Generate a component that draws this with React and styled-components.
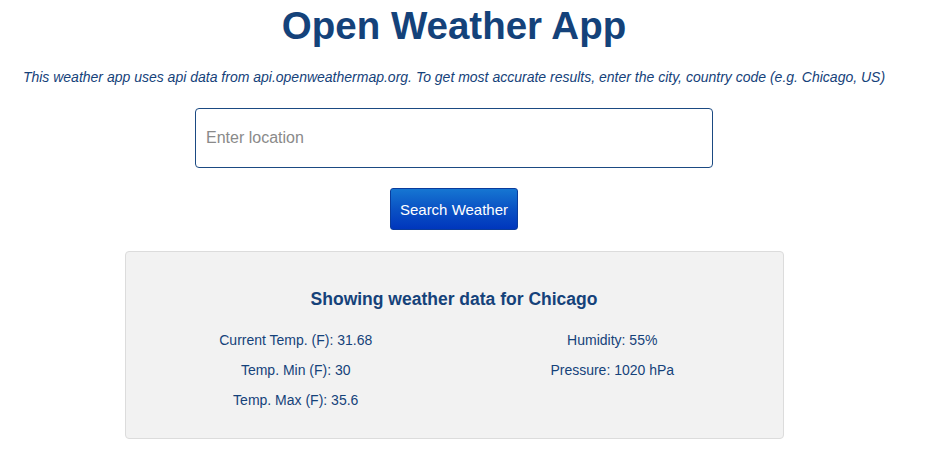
import React from "react";
import styled, { createGlobalStyle } from "styled-components";

const Global = createGlobalStyle`
  html, body { margin: 0; padding: 0; background: #ffffff; }
  body { font-family: "Liberation Sans", Arial, sans-serif; }
  * { box-sizing: border-box; }
`;

const Page = styled.div`
  width: 908px;
  display: flex;
  flex-direction: column;
  align-items: center;
  padding-top: 4px;
  color: #15427a;
`;

const Title = styled.h1`
  margin: 0;
  font-size: 38.5px;
  line-height: 44px;
  font-weight: 700;
  color: #14427a;
`;

const Subtitle = styled.p`
  margin: 21px 0 0;
  font-size: 14px;
  line-height: 16px;
  font-style: italic;
  color: #15427a;
  white-space: nowrap;
`;

const Input = styled.input`
  margin-top: 23px;
  width: 518px;
  height: 60px;
  border: 1px solid #1b4a82;
  border-radius: 4px;
  padding: 0 10px;
  font-family: "Liberation Sans", Arial, sans-serif;
  font-size: 16px;
  color: #333;
  outline: none;
  &::placeholder { color: #8a8a8a; }
`;

const Button = styled.button`
  margin-top: 20px;
  width: 128px;
  height: 42px;
  border: 1px solid #0a3c9c;
  border-radius: 3px;
  background: linear-gradient(to bottom, #1676d2 0%, #0a52c4 50%, #0036bd 100%);
  color: #ffffff;
  font-family: "Liberation Sans", Arial, sans-serif;
  font-size: 15px;
  cursor: pointer;
`;

const Card = styled.section`
  margin-top: 21px;
  width: 659px;
  height: 188px;
  background: #f2f2f2;
  border: 1px solid #dcdcdc;
  border-radius: 4px;
  padding: 37px 12px 0;
`;

const CardTitle = styled.h3`
  margin: 0;
  text-align: center;
  font-size: 17.5px;
  line-height: 20px;
  font-weight: 700;
  color: #15427a;
`;

const Grid = styled.div`
  margin-top: 23px;
  display: grid;
  grid-template-columns: 1fr 1fr;
`;

const Column = styled.div`
  display: flex;
  flex-direction: column;
  align-items: center;
  gap: 14px;
`;

const Stat = styled.div`
  font-size: 14px;
  line-height: 16px;
  color: #15427a;
`;

export default function App() {
  return (
    <>
      <Global />
      <Page>
        <Title>Open Weather App</Title>
        <Subtitle>
          This weather app uses api data from api.openweathermap.org. To get most accurate results, enter the city, country code (e.g. Chicago, US)
        </Subtitle>
        <Input placeholder="Enter location" />
        <Button>Search Weather</Button>
        <Card>
          <CardTitle>Showing weather data for Chicago</CardTitle>
          <Grid>
            <Column>
              <Stat>Current Temp. (F): 31.68</Stat>
              <Stat>Temp. Min (F): 30</Stat>
              <Stat>Temp. Max (F): 35.6</Stat>
            </Column>
            <Column>
              <Stat>Humidity: 55%</Stat>
              <Stat>Pressure: 1020 hPa</Stat>
            </Column>
          </Grid>
        </Card>
      </Page>
    </>
  );
}
